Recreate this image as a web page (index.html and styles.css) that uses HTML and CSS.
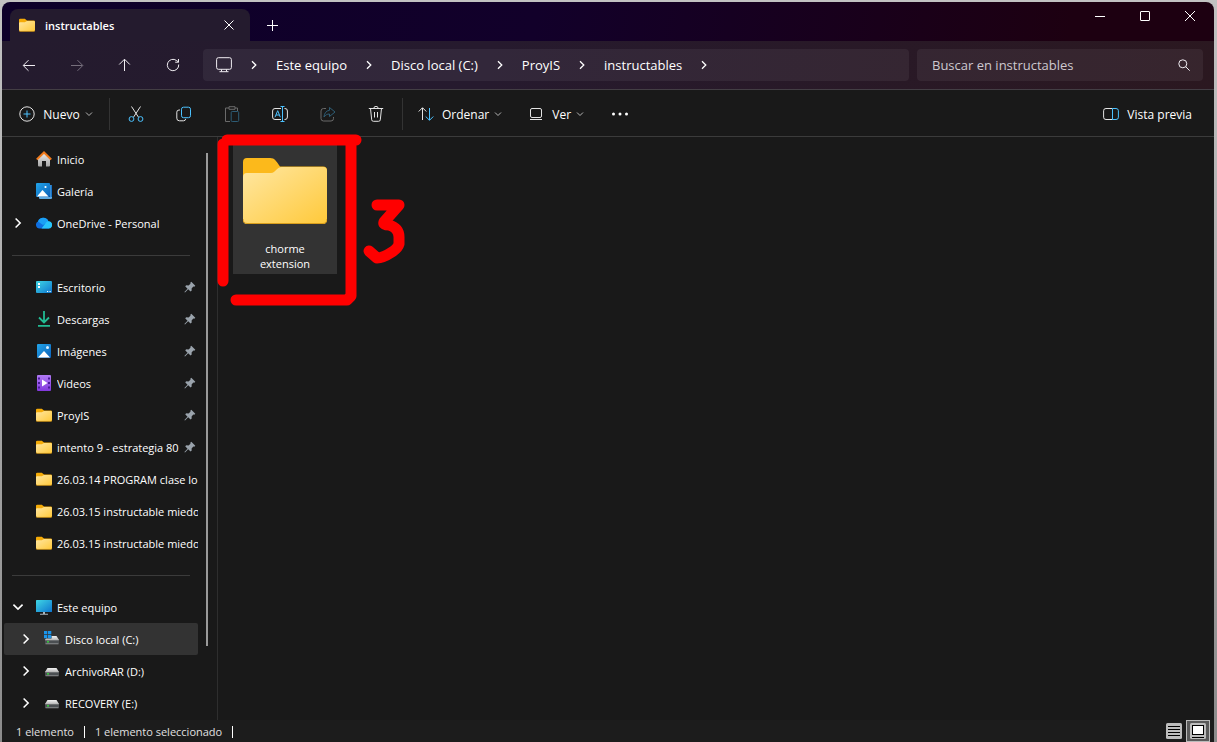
FILE: index.html
```html
<!DOCTYPE html>
<html lang="es">
<head>
  <meta charset="UTF-8">
  <meta name="viewport" content="width=device-width, initial-scale=1.0">
  <title>instructables</title>
  <link rel="stylesheet" href="styles.css">
</head>
<body>
  <!-- Shared icons -->
  <svg class="sprite" aria-hidden="true">
    <defs>
      <linearGradient id="folderFront" x1="0" y1="0" x2="1" y2="1">
        <stop offset="0" stop-color="#ffe7a2"/>
        <stop offset="1" stop-color="#ffc93a"/>
      </linearGradient>
      <linearGradient id="blue" x1="0" y1="0" x2="1" y2="1">
        <stop offset="0" stop-color="#22a5ea"/>
        <stop offset="1" stop-color="#0b5fb8"/>
      </linearGradient>
      <linearGradient id="teal" x1="0" y1="0" x2="1" y2="1">
        <stop offset="0" stop-color="#3fd6e4"/>
        <stop offset="1" stop-color="#0f76cf"/>
      </linearGradient>
      <linearGradient id="purple" x1="0" y1="0" x2="0" y2="1">
        <stop offset="0" stop-color="#b07af5"/>
        <stop offset="1" stop-color="#8238dd"/>
      </linearGradient>
      <linearGradient id="wall" x1="0" y1="0" x2="0" y2="1">
        <stop offset="0" stop-color="#ececec"/>
        <stop offset="1" stop-color="#a5a5a5"/>
      </linearGradient>
      <linearGradient id="drive" x1="0" y1="0" x2="0" y2="1">
        <stop offset="0" stop-color="#f2f2f2"/>
        <stop offset="1" stop-color="#b8b8b8"/>
      </linearGradient>
    </defs>
    <symbol id="i-folder" viewBox="0 0 16 16">
      <path d="M0 3a1.200 1.200 0 0 1 1.200-1.300h4.600L8 3.600h6.800A1.200 1.200 0 0 1 16 4.800V8H0z" fill="#f5ab07"/>
      <path d="M0 6.200a1 1 0 0 1 1-1h4.800L8 4h6.800A1.200 1.200 0 0 1 16 5.200v8A1.100 1.100 0 0 1 14.900 14.300H1.100A1.100 1.100 0 0 1 0 13.200z" fill="url(#folderFront)"/>
      <path d="M0 13.200a1.100 1.100 0 0 0 1.100 1.200h13.800a1.100 1.100 0 0 0 1.100-1.200" fill="none" stroke="#dd9c14" stroke-width=".7"/>
    </symbol>
    <symbol id="i-chevron" viewBox="0 0 10 10">
      <path d="M3 1.200 6.800 5 3 8.800" fill="none" stroke="currentColor" stroke-width="1.300"/>
    </symbol>
    <symbol id="i-down" viewBox="0 0 8 8">
      <path d="M1 2.500 4 5.500 7 2.500" fill="none" stroke="currentColor"/>
    </symbol>
    <symbol id="i-pin" viewBox="0 0 12 12">
      <path d="M7.300.7 11.300 4.700 10.300 5.700 9.300 5.500 7.600 7.500 7.700 9.500 6.600 10.600 4.200 8.300 1 11.400.4 10.900 3.500 7.700 1.200 5.300 2.300 4.300 4.500 4.400 6.500 2.700 6.300 1.700z" fill="#9aa3ac"/>
    </symbol>
    <symbol id="i-drive" viewBox="0 0 16 16">
      <path d="M3.500 5h9L15 9H1z" fill="url(#drive)"/>
      <rect x="1" y="9" width="14" height="4" rx="1" fill="#4b4f52"/>
      <path d="M1 9h14M1.500 12.800h13" stroke="#b9b9b9" stroke-width=".6"/>
      <rect x="3" y="10.200" width="2" height="1.300" fill="#35e03c"/>
    </symbol>
    <symbol id="i-picture" viewBox="0 0 16 16">
      <rect x="1" y="1" width="14" height="14" rx="1" fill="url(#blue)"/>
      <path d="M2 14.500 8 8l6 6.500z" fill="#fff"/>
      <circle cx="11.500" cy="4.500" r="1.500" fill="#d9f1ff"/>
    </symbol>
  </svg>

  <div class="window">
    <header class="titlebar">
      <div class="tab">
        <svg class="icon"><use href="#i-folder"/></svg>
        <span class="tab-name">instructables</span>
        <button class="tab-close" aria-label="Cerrar pestaña">
          <svg width="10" height="10" viewBox="0 0 10 10"><path d="M.5.5l9 9M9.500.5l-9 9" stroke="#fff"/></svg>
        </button>
      </div>
      <button class="new-tab" aria-label="Nueva pestaña">
        <svg width="11" height="11" viewBox="0 0 11 11"><path d="M5.500 0v11M0 5.500h11" stroke="#fff"/></svg>
      </button>
      <div class="window-buttons">
        <button aria-label="Minimizar"><svg width="10" height="10" viewBox="0 0 10 10"><path d="M0 5.500h10" stroke="#fff"/></svg></button>
        <button aria-label="Maximizar"><svg width="10" height="10" viewBox="0 0 10 10"><rect x=".5" y=".5" width="9" height="9" rx=".5" fill="none" stroke="#fff"/></svg></button>
        <button aria-label="Cerrar"><svg width="10" height="10" viewBox="0 0 10 10"><path d="M0 0l10 10M10 0 0 10" stroke="#fff"/></svg></button>
      </div>
    </header>

    <div class="navbar">
      <nav class="nav-buttons" aria-label="Historial">
        <button aria-label="Atrás"><svg class="icon" viewBox="0 0 16 16"><path d="M14 8.500H2.500M7.500 3.200 2.200 8.500l5.300 5.300"/></svg></button>
        <button aria-label="Adelante" disabled><svg class="icon" viewBox="0 0 16 16"><path d="M2 8.500h11.500M8.500 3.200 13.800 8.500l-5.300 5.300"/></svg></button>
        <button aria-label="Arriba"><svg class="icon" viewBox="0 0 16 16"><path d="M7.500 14V2.500M2.200 7.500 7.500 2.200l5.300 5.300"/></svg></button>
        <button aria-label="Actualizar"><svg class="icon" viewBox="0 0 16 16"><path d="M13.700 7.500A5.700 5.700 0 1 1 11.500 3.500L13.500 5M13.500 2v3.200h-3.300"/></svg></button>
      </nav>
      <nav class="breadcrumb" aria-label="Ruta">
        <svg class="icon" viewBox="0 0 16 16"><rect x=".6" y=".7" width="14.800" height="11.600" rx="1.800"/><path d="M5.500 12.500v2M10.500 12.500v2M3.500 14.700h9"/></svg>
        <svg class="chev"><use href="#i-chevron"/></svg>
        <a href="#">Este equipo</a>
        <svg class="chev"><use href="#i-chevron"/></svg>
        <a href="#">Disco local (C:)</a>
        <svg class="chev"><use href="#i-chevron"/></svg>
        <a href="#">ProyIS</a>
        <svg class="chev"><use href="#i-chevron"/></svg>
        <a href="#">instructables</a>
        <svg class="chev"><use href="#i-chevron"/></svg>
      </nav>
      <form class="search">
        <input type="text" placeholder="Buscar en instructables" aria-label="Buscar en instructables">
        <button type="button" aria-label="Buscar"><svg width="12" height="12" viewBox="0 0 12 12"><circle cx="4.800" cy="4.800" r="4"/><path d="M7.700 7.700l4 4"/></svg></button>
      </form>
    </div>

    <div class="toolbar">
      <button class="tool new">
        <svg class="icon" viewBox="0 0 16 16"><circle cx="8" cy="8" r="7.200"/><path class="accent" d="M8 4.500v7M4.500 8h7"/></svg>
        Nuevo
        <svg class="down"><use href="#i-down"/></svg>
      </button>
      <span class="separator"></span>
      <div class="actions">
        <button aria-label="Cortar"><svg class="icon" viewBox="0 0 16 16"><path d="M3.500.5l7 10.700M12.500.5l-7 10.700"/><circle class="accent" cx="3.500" cy="13" r="2.400"/><circle class="accent" cx="12.500" cy="13" r="2.400"/></svg></button>
        <button aria-label="Copiar"><svg class="icon" viewBox="0 0 16 16"><path d="M4 4H3A2.200 2.200 0 0 0 .8 6.200v6A2.600 2.600 0 0 0 3.400 14.800H7.500a2.200 2.200 0 0 0 2.200-2"/><rect class="accent" x="5.500" y="1.200" width="9" height="10.500" rx="2"/></svg></button>
        <button aria-label="Pegar" disabled><svg class="icon" viewBox="0 0 16 16"><path d="M5 2H1.500v13.500H6M11 2h2.500v3M5 .7h6v2.600H5z"/><rect class="accent" x="7.200" y="5.500" width="7.500" height="10" rx="1"/></svg></button>
        <button aria-label="Cambiar nombre"><svg class="icon" viewBox="0 0 16 16"><path d="M9 2.500H3A2.400 2.400 0 0 0 .6 5v6A2.400 2.400 0 0 0 3 13.500h6M12.500 2.500h.5A2.400 2.400 0 0 1 15.400 5v6a2.400 2.400 0 0 1-2.400 2.500h-.5"/><path class="accent" d="M3 11.200 5.700 4.700l2.600 6.500M4 9h3.400M10.500.5v15M8.500.5h4M8.500 15.500h4"/></svg></button>
        <button aria-label="Compartir" disabled><svg class="icon" viewBox="0 0 16 16"><path d="M6 2.500H3.500A2.500 2.500 0 0 0 1 5v7.500A2.500 2.500 0 0 0 3.500 15H11a2.500 2.500 0 0 0 2.500-2.500V11"/><path class="accent" d="M9.500 1.500 15 6l-5.500 4.500V8C7 8 5.300 9 4 11c.2-3.700 2.200-6.300 5.500-6.700z"/></svg></button>
        <button aria-label="Eliminar"><svg class="icon" viewBox="0 0 16 16"><path d="M.8 2.500h14.400M5.800 2.500a2.200 2.200 0 0 1 4.400 0M2.500 2.500l1.200 11.300a1.700 1.700 0 0 0 1.700 1.500h5.200a1.700 1.700 0 0 0 1.700-1.500L13.500 2.500M6.500 6v5.500M9.500 6v5.500"/></svg></button>
      </div>
      <span class="separator"></span>
      <button class="tool sort">
        <svg class="icon" viewBox="0 0 16 16"><path d="M4.500 14V2M.7 5.500 4.500 1.700l3.800 3.800"/><path class="accent" d="M11.500 2v12M7.700 10.500l3.800 3.800 3.800-3.800"/></svg>
        Ordenar
        <svg class="down"><use href="#i-down"/></svg>
      </button>
      <button class="tool">
        <svg class="icon" viewBox="0 0 16 16"><rect x="2.500" y="2.500" width="11" height="9" rx="1.500"/><path d="M2 13.500h12"/></svg>
        Ver
        <svg class="down"><use href="#i-down"/></svg>
      </button>
      <button class="more" aria-label="Ver más"><svg class="icon" viewBox="0 0 16 16"><circle cx="1.500" cy="8" r="1.500"/><circle cx="8" cy="8" r="1.500"/><circle cx="14.500" cy="8" r="1.500"/></svg></button>
      <button class="tool preview">
        <svg class="icon" viewBox="0 0 16 16"><path d="M9.500 2.500H3A2.300 2.300 0 0 0 .6 4.800v6.400A2.300 2.300 0 0 0 3 13.500h6.500"/><path class="accent" d="M9.500 2.500H13a2.300 2.300 0 0 1 2.400 2.300v6.400a2.300 2.300 0 0 1-2.400 2.300H9.500z"/></svg>
        Vista previa
      </button>
    </div>

    <main class="content">
      <nav class="sidebar" aria-label="Panel de navegación">
        <ul class="tree">
          <li><a href="#"><span class="toggle"></span>
            <svg class="icon" viewBox="0 0 16 16"><path d="M2 7l6-5.500L14 7v7.500a1 1 0 0 1-1 1h-3V10H6v5.500H3a1 1 0 0 1-1-1z" fill="url(#wall)"/><path d="M.8 8.500 8 1.500l7.200 7" fill="none" stroke="#f07a1c" stroke-width="2"/></svg>
            <span class="name">Inicio</span></a></li>
          <li><a href="#"><span class="toggle"></span>
            <svg class="icon" viewBox="0 0 16 16"><path d="M3 14h11V2h1a1 1 0 0 1 1 1v12a1 1 0 0 1-1 1H4a1 1 0 0 1-1-1z" fill="#5fa9e0"/><path d="M14.500 2H15a1 1 0 0 1 1 1v11h-1.500z" fill="#1673c8"/><rect width="14" height="14" rx="1" fill="url(#blue)"/><path d="M1 13.500 6.500 7l6 6.500z" fill="#fff"/><circle cx="9.500" cy="4" r="1.100" fill="#fff"/></svg>
            <span class="name">Galería</span></a></li>
          <li><a href="#"><span class="toggle"><svg class="chev"><use href="#i-chevron"/></svg></span>
            <svg class="icon" viewBox="0 0 16 16"><path d="M3.500 13.500A3.700 3.700 0 0 1 2 6.500a5.600 5.600 0 0 1 10.500 0 3.600 3.600 0 0 1 .3 7z" fill="#0f6fe0"/><path d="M2 6.500a5.600 5.600 0 0 1 10.500 0L7 10z" fill="#1aa0f5"/><path d="M5.500 13.500 10 7.500a3.600 3.600 0 1 1 2.500 6z" fill="#27c4fb"/></svg>
            <span class="name">OneDrive - Personal</span></a></li>
          <li class="divider"></li>
          <li><a href="#"><span class="toggle"></span>
            <svg class="icon" viewBox="0 0 16 16"><rect y="2" width="16" height="12" rx="1" fill="url(#teal)"/><path d="M2 4h2v2H2zM2 7h2v2H2z" fill="#fff"/><path d="M11 12.500h1.200M13.500 12.500h1.200" stroke="#fff"/></svg>
            <span class="name">Escritorio</span><svg class="pin"><use href="#i-pin"/></svg></a></li>
          <li><a href="#"><span class="toggle"></span>
            <svg class="icon" viewBox="0 0 16 16"><path d="M8 0v11M3 6.500l5 5 5-5M2 14.800h12" fill="none" stroke="#22bb93" stroke-width="1.800"/></svg>
            <span class="name">Descargas</span><svg class="pin"><use href="#i-pin"/></svg></a></li>
          <li><a href="#"><span class="toggle"></span>
            <svg class="icon"><use href="#i-picture"/></svg>
            <span class="name">Imágenes</span><svg class="pin"><use href="#i-pin"/></svg></a></li>
          <li><a href="#"><span class="toggle"></span>
            <svg class="icon" viewBox="0 0 16 16"><rect x="1" width="14" height="16" rx="1" fill="url(#purple)"/><path d="M3 2.500v12M13 2.500v12" stroke="#4a1c96" stroke-width="2" stroke-dasharray="2 2.500"/><path d="M6 4.500 11.500 8 6 11.500z" fill="#fff"/></svg>
            <span class="name">Videos</span><svg class="pin"><use href="#i-pin"/></svg></a></li>
          <li><a href="#"><span class="toggle"></span><svg class="icon"><use href="#i-folder"/></svg>
            <span class="name">ProyIS</span><svg class="pin"><use href="#i-pin"/></svg></a></li>
          <li><a href="#"><span class="toggle"></span><svg class="icon"><use href="#i-folder"/></svg>
            <span class="name">intento 9 - estrategia 80</span><svg class="pin"><use href="#i-pin"/></svg></a></li>
          <li><a href="#"><span class="toggle"></span><svg class="icon"><use href="#i-folder"/></svg>
            <span class="name">26.03.14 PROGRAM clase lo</span></a></li>
          <li><a href="#"><span class="toggle"></span><svg class="icon"><use href="#i-folder"/></svg>
            <span class="name">26.03.15 instructable miedo</span></a></li>
          <li><a href="#"><span class="toggle"></span><svg class="icon"><use href="#i-folder"/></svg>
            <span class="name">26.03.15 instructable miedo</span></a></li>
          <li class="divider"></li>
          <li><a href="#"><span class="toggle open"><svg class="chev"><use href="#i-chevron"/></svg></span>
            <svg class="icon" viewBox="0 0 16 16"><rect y="1" width="16" height="12" rx=".6" fill="url(#teal)"/><path d="M7 13h2v2H7zM4 14.700h8v1H4z" fill="#a9b3bb"/></svg>
            <span class="name">Este equipo</span></a></li>
          <li class="child selected"><a href="#"><span class="toggle"><svg class="chev"><use href="#i-chevron"/></svg></span>
            <svg class="icon" viewBox="0 0 16 16"><use href="#i-drive"/><path d="M0 0h7.500v7.500H0z" fill="#333"/><path d="M0 0h3.300v3.300H0zM4 0h3.300v3.300H4zM0 4h3.300v3.300H0zM4 4h3.300v3.300H4z" fill="#1a94ea"/></svg>
            <span class="name">Disco local (C:)</span></a></li>
          <li class="child"><a href="#"><span class="toggle"><svg class="chev"><use href="#i-chevron"/></svg></span>
            <svg class="icon"><use href="#i-drive"/></svg>
            <span class="name">ArchivoRAR (D:)</span></a></li>
          <li class="child"><a href="#"><span class="toggle"><svg class="chev"><use href="#i-chevron"/></svg></span>
            <svg class="icon"><use href="#i-drive"/></svg>
            <span class="name">RECOVERY (E:)</span></a></li>
        </ul>
        <div class="scroll"><span class="thumb"></span></div>
      </nav>

      <section class="files">
        <a href="#" class="file">
          <svg class="big-folder" viewBox="0 0 84 68">
            <path d="M0 5a4 4 0 0 1 4-4h23c5 0 6 3 10 8.500h43a4 4 0 0 1 4 4V34H0z" fill="#fcb91b"/>
            <path d="M0 20a4 4 0 0 1 4-4h24c5 0 5-6 11-6h41a4 4 0 0 1 4 4v49a4 4 0 0 1-4 4H4a4 4 0 0 1-4-4z" fill="url(#folderFront)"/>
            <path d="M0 62a4 4 0 0 0 4 4.500h76a4 4 0 0 0 4-4.500" fill="none" stroke="#d99e1c"/>
          </svg>
          <span>chorme extension</span>
        </a>
        <svg class="marks" width="200" height="172" viewBox="0 0 200 172" aria-hidden="true">
          <path d="M10 6H139M6 10V147M134 8V162L130 166H19"/>
          <path d="M160 71H182L167 88Q166 91 172 91Q182 94 182 103V110Q181 114 175 118Q166 124 160 124L152 117"/>
        </svg>
      </section>
    </main>

    <footer class="status">
      <span>1 elemento</span>
      <span>1 elemento seleccionado</span>
      <div class="views">
        <button aria-label="Detalles"><svg width="16" height="16" viewBox="0 0 16 16"><rect width="16" height="16" rx="1.500" fill="#bdbdbd"/><path d="M2 3.500h12M2 6.500h12M2 9.500h12M2 12.500h12" stroke="#000"/></svg></button>
        <button class="active" aria-label="Iconos grandes"><svg width="16" height="16" viewBox="0 0 16 16"><rect width="16" height="16" rx="1.500" fill="#bdbdbd"/><rect x="2.500" y="2.500" width="11" height="9" fill="#fff" stroke="#000"/><path d="M2 14.500h12" stroke="#000"/></svg></button>
      </div>
    </footer>
  </div>
</body>
</html>
```
FILE: styles.css
```css
* {
  margin: 0;
  padding: 0;
  box-sizing: border-box;
}

body {
  height: 100vh;
  padding: 2px 3px 0 2px;
  overflow: hidden;
  font-family: "Open Sans", "Noto Sans", sans-serif;
  font-size: 12px;
  color: #fff;
  background: linear-gradient(#c2c2c2, #b4b4b4 30%, #8c8c8c);
}

a {
  color: inherit;
  text-decoration: none;
}

button {
  display: flex;
  align-items: center;
  justify-content: center;
  font: inherit;
  color: inherit;
  background: none;
  border: none;
}

svg {
  flex: none;
}

.sprite {
  position: absolute;
  width: 0;
  height: 0;
}

.icon {
  width: 16px;
  height: 16px;
}

.chev {
  width: 10px;
  height: 10px;
}

.window {
  display: flex;
  flex-direction: column;
  height: 100%;
  overflow: hidden;
  border-radius: 8px 8px 0 0;
  background: linear-gradient(100deg, #0d0029, #12002a 40%, #1d0011 80%);
}

/* Title bar */
.titlebar {
  display: flex;
  align-items: flex-end;
  height: 39px;
  padding-left: 8px;
}

.tab {
  display: flex;
  align-items: center;
  width: 240px;
  height: 32px;
  padding: 0 11px 0 9px;
  border-radius: 8px 8px 0 0;
  background: #241b2e;
}

.tab-name {
  flex: 1;
  margin-left: 10px;
  font-size: 11px;
  font-weight: 600;
}

.tab-close {
  width: 20px;
  height: 20px;
}

.new-tab {
  width: 45px;
  height: 32px;
}

.window-buttons {
  display: flex;
  align-self: flex-start;
  margin-left: auto;
  margin-right: 2px;
}

.window-buttons button {
  width: 45px;
  height: 28px;
}

/* Address row */
.navbar {
  display: flex;
  align-items: center;
  height: 49px;
  padding: 0 11px 0 3px;
  border-bottom: 1px solid #433e44;
  background: linear-gradient(100deg, #241b2e, #261a2e 40%, #2b1820);
  font-size: 13px;
}

.nav-buttons {
  display: flex;
}

.nav-buttons button {
  width: 48px;
  height: 32px;
}

.navbar svg {
  fill: none;
  stroke: #f0edf2;
}

.nav-buttons button:disabled {
  opacity: 0.4;
}

.breadcrumb {
  display: flex;
  flex: 1;
  align-items: center;
  height: 32px;
  margin: 0 8px 0 6px;
  padding-left: 13px;
  border-radius: 4px;
  background: rgba(255, 255, 255, 0.06);
}

.breadcrumb .chev {
  margin: 0 17px;
}

.search {
  display: flex;
  align-items: center;
  width: 286px;
  height: 32px;
  padding: 0 13px 0 15px;
  border-radius: 4px;
  background: rgba(255, 255, 255, 0.06);
}

.search input {
  flex: 1;
  min-width: 0;
  font: inherit;
  color: #fff;
  background: none;
  border: none;
  outline: none;
}

.search input::placeholder {
  color: #cdc8cf;
}

/* Toolbar */
.toolbar {
  display: flex;
  align-items: center;
  height: 47px;
  padding-top: 2px;
  border-bottom: 1px solid #3b3b3b;
  background: #191919;
}

.toolbar svg {
  fill: none;
  stroke: #e4e4e4;
}

.toolbar .accent {
  stroke: #4cc2ff;
}

.toolbar button:disabled {
  opacity: 0.4;
}

.tool {
  gap: 8px;
  height: 32px;
  padding: 0 11px;
}

.new {
  width: 107px;
  padding-left: 12px;
}

.down {
  width: 8px;
  height: 8px;
  margin-left: -3px;
  color: #b5b5b5;
}

.separator {
  width: 1px;
  height: 32px;
  background: #333;
}

.actions {
  display: flex;
  margin: 0 2px;
}

.actions button {
  width: 48px;
  height: 32px;
}

.sort {
  margin: 0 4px;
}

.toolbar .more {
  width: 50px;
  height: 32px;
}

.more circle {
  fill: #fff;
  stroke: none;
}

.preview {
  margin-left: auto;
  margin-right: 11px;
}

/* Main area */
.content {
  display: flex;
  flex: 1;
  min-height: 0;
  background: #191919;
}

.sidebar {
  display: flex;
  width: 216px;
  border-right: 1px solid #2e2e2e;
  font-size: 11px;
}

.tree {
  width: 196px;
  padding: 6px 0 0 2px;
  list-style: none;
}

.tree li {
  height: 32px;
}

.tree a {
  display: flex;
  align-items: center;
  height: 32px;
}

.tree .child {
  padding-left: 8px;
}

.tree .selected {
  border-radius: 2px;
  background: #333;
}

.toggle {
  display: flex;
  justify-content: center;
  width: 28px;
  margin-right: 4px;
}

.toggle .chev {
  width: 12px;
  height: 12px;
}

.toggle.open .chev {
  transform: rotate(90deg);
}

.name {
  flex: 1;
  min-width: 0;
  margin-left: 5px;
  overflow: hidden;
  white-space: nowrap;
}

.pin {
  width: 12px;
  height: 12px;
  margin: 0 2px;
}

.tree .divider {
  padding: 16px 8px 0;
}

.divider::before {
  content: "";
  display: block;
  height: 1px;
  background: #3b3b3b;
}

.scroll {
  padding: 16px 0 74px 8px;
}

.thumb {
  display: block;
  width: 2px;
  height: 100%;
  background: #9a9a9a;
}

.files {
  position: relative;
  flex: 1;
  padding: 8px 15px;
}

.file {
  display: flex;
  flex-direction: column;
  align-items: center;
  width: 104px;
  height: 129px;
  padding: 12px 16px 0;
  background: #333;
  text-align: center;
  font-size: 11px;
  line-height: 15px;
}

.big-folder {
  width: 84px;
  height: 68px;
  margin-bottom: 16px;
}

/* Red pen marks drawn over the files */
.marks {
  position: absolute;
  top: -3px;
  left: -1px;
  fill: none;
  stroke: #f00;
  stroke-width: 11px;
  stroke-linecap: round;
  stroke-linejoin: round;
}

/* Status bar */
.status {
  display: flex;
  align-items: center;
  height: 22px;
  padding-left: 14px;
  background: #1c1c1c;
  color: #e0e0e0;
  font-size: 11px;
}

.status span {
  margin: 2px 10px 0 0;
  padding-right: 10px;
  border-right: 1px solid #fff;
  line-height: 12px;
}

.views {
  display: flex;
  margin-left: auto;
  margin-right: 4px;
}

.views button {
  width: 24px;
  height: 22px;
}

.views .active {
  border: 1px solid #bbb;
  background: #5a5a5a;
}
```
